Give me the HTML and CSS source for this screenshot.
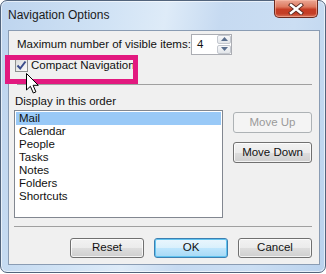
FILE: index.html
```html
<!DOCTYPE html>
<html>
<head>
<meta charset="utf-8">
<link rel="stylesheet" href="styles.css">
</head>
<body>
<div class="window">
  <div class="titlebar">
    <span class="title">Navigation Options</span>
    <div class="close">
      <svg width="16" height="12" viewBox="0 0 16 12">
        <path d="M3 2 L13 10 M13 2 L3 10" stroke="#5a2a22" stroke-width="4.2" stroke-linecap="square" fill="none"/>
        <path d="M3 2 L13 10 M13 2 L3 10" stroke="#ffffff" stroke-width="2.4" stroke-linecap="square" fill="none"/>
      </svg>
    </div>
  </div>
  <div class="client">
    <div class="row-max">
      <span class="max-label">Maximum number of visible items:</span>
      <div class="spin">
        <span class="spin-val">4</span>
        <div class="spin-btns">
          <span class="spin-btn"><svg width="7" height="4" viewBox="0 0 7 4"><path d="M0 4 L3.5 0 L7 4Z" fill="#5a6f8e"/></svg></span>
          <span class="spin-btn"><svg width="7" height="4" viewBox="0 0 7 4"><path d="M0 0 L3.5 4 L7 0Z" fill="#5a6f8e"/></svg></span>
        </div>
      </div>
    </div>
    <div class="check-row">
      <span class="checkbox">
        <svg width="11" height="11" viewBox="0 0 11 11"><path d="M1.5 5.5 L4.2 8.5 L9.5 1.5" stroke="#3b4d8c" stroke-width="2" fill="none"/></svg>
      </span>
      <span class="check-label">Compact Navigation</span>
    </div>
    <div class="sep sep-top"></div>
    <div class="order-label">Display in this order</div>
    <div class="order">
      <ul class="list">
        <li class="selected">Mail</li>
        <li>Calendar</li>
        <li>People</li>
        <li>Tasks</li>
        <li>Notes</li>
        <li>Folders</li>
        <li>Shortcuts</li>
      </ul>
      <div class="side">
        <button class="btn disabled">Move Up</button>
        <button class="btn">Move Down</button>
      </div>
    </div>
    <div class="sep sep-bottom"></div>
    <div class="footer">
      <button class="btn">Reset</button>
      <button class="btn default">OK</button>
      <button class="btn">Cancel</button>
    </div>
  </div>
  <div class="highlight"></div>
  <svg class="cursor" width="14" height="22" viewBox="0 0 14 22">
    <path d="M0.5 0.5 L0.5 17 L4.4 13.3 L7.3 20 L9.9 18.9 L7.1 12.3 L12.3 12.3 Z" fill="#ffffff" stroke="#000000" stroke-width="1" stroke-linejoin="miter"/>
  </svg>
</div>
</body>
</html>
```

FILE: styles.css
```css
html, body {
  margin: 0;
  padding: 0;
  background: #ffffff;
}

body {
  width: 326px;
  height: 274px;
  overflow: hidden;
  font-family: "Liberation Sans", Arial, sans-serif;
  font-size: 11.5px;
  line-height: 13px;
  color: #111111;
}

.window {
  position: relative;
  box-sizing: border-box;
  width: 326px;
  height: 273px;
  border: 1px solid #52647c;
  border-radius: 7px;
  background: linear-gradient(100deg, #bdd4ee 0%, #d1e3f5 30%, #deebf8 45%, #c6daf1 60%, #cbdef3 80%, #bad2ed 100%);
  box-shadow: inset 0 0 0 1px rgba(255,255,255,0.6);
  padding: 0 5px 7px 7px;
  display: flex;
  flex-direction: column;
}

.titlebar {
  height: 29px;
  display: flex;
  align-items: flex-start;
  justify-content: space-between;
}

.title {
  margin-top: 8px;
  font-size: 12px;
  color: #1a1a1a;
}

.close {
  width: 44px;
  height: 18px;
  margin-top: -1px;
  margin-right: 2px;
  box-sizing: border-box;
  border: 1px solid #6b2a20;
  border-top: none;
  border-radius: 0 0 5px 5px;
  background: linear-gradient(to bottom, #eba795 0%, #de7a60 40%, #c63d25 55%, #c43f27 80%, #d8735a 100%);
  box-shadow: inset 0 0 0 1px rgba(255,200,180,0.5);
  display: flex;
  align-items: center;
  justify-content: center;
}

.client {
  box-sizing: border-box;
  height: 236px;
  border: 1px solid #8a9cb3;
  background: #f0f0f0;
  padding: 3px 7px 0 5px;
  display: flex;
  flex-direction: column;
}

.row-max {
  display: flex;
  align-items: center;
  height: 21px;
  margin-left: 3px;
}

.max-label {
  flex: 0 0 174px;
  white-space: nowrap;
  overflow: hidden;
}

.spin {
  box-sizing: border-box;
  flex: 0 0 41px;
  height: 21px;
  border: 1px solid #abadb3;
  background: #ffffff;
  display: flex;
  align-items: center;
}

.spin-val {
  flex: 1;
  padding-left: 5px;
}

.spin-btns {
  display: flex;
  flex-direction: column;
  width: 14px;
  height: 19px;
  gap: 1px;
}

.spin-btn {
  flex: 1;
  box-sizing: border-box;
  border: 1px solid #c4c8cf;
  border-radius: 2px;
  background: linear-gradient(to bottom, #f7f8fa, #e3e6ea);
  display: flex;
  align-items: center;
  justify-content: center;
}

.check-row {
  display: flex;
  align-items: center;
  height: 15px;
  margin-top: 3px;
  margin-left: 1px;
}

.checkbox {
  box-sizing: border-box;
  width: 13px;
  height: 13px;
  border: 1px solid #8e8f8f;
  background: linear-gradient(135deg, #dcdcdc, #fbfbfb);
  display: flex;
  align-items: center;
  justify-content: center;
  margin-right: 3px;
}

.sep {
  height: 1px;
  background: #a0a0a0;
}

.sep-top {
  margin-top: 11px;
  margin-left: 3px;
}

.order-label {
  margin-top: 9px;
  margin-left: 1px;
  height: 15px;
  line-height: 15px;
}

.order {
  display: flex;
  justify-content: space-between;
  margin-top: 1px;
}

.list {
  box-sizing: border-box;
  width: 209px;
  height: 108px;
  margin: 0;
  padding: 1px;
  list-style: none;
  border: 1px solid #828790;
  background: #ffffff;
}

.list li {
  height: 13px;
  line-height: 13px;
  padding-left: 3px;
}

.list li.selected {
  background: #99c9f7;
}

.side {
  display: flex;
  flex-direction: column;
  gap: 9px;
  margin-top: 2px;
}

.btn {
  box-sizing: border-box;
  width: 79px;
  height: 21px;
  padding: 0;
  font-family: inherit;
  font-size: 11.5px;
  line-height: 13px;
  color: #111111;
  border: 1px solid #707070;
  border-radius: 3px;
  background: linear-gradient(to bottom, #f2f2f2 0%, #ebebeb 50%, #dddddd 51%, #cfcfcf 100%);
  box-shadow: inset 0 0 0 1px rgba(255,255,255,0.75);
}

.btn.disabled {
  color: #9a9a9a;
  border-color: #adb2b5;
  background: #f4f4f4;
  box-shadow: none;
}

.sep-bottom {
  margin-top: 8px;
}

.footer {
  display: flex;
  justify-content: flex-end;
  gap: 10px;
  margin-top: 11px;
}

.footer .btn {
  width: 74px;
  height: 20px;
}

.btn.default {
  border-color: #3c7fb1;
  background: linear-gradient(to bottom, #eaf6fd 0%, #d9f0fc 50%, #bee6fd 51%, #a7d9f5 100%);
  box-shadow: inset 0 0 0 1px #62c4f0;
}

.highlight {
  position: absolute;
  left: 4px;
  top: 54px;
  width: 133px;
  height: 29px;
  box-sizing: border-box;
  border: 5px solid #e2197f;
}

.cursor {
  position: absolute;
  left: 25px;
  top: 72px;
}
```
